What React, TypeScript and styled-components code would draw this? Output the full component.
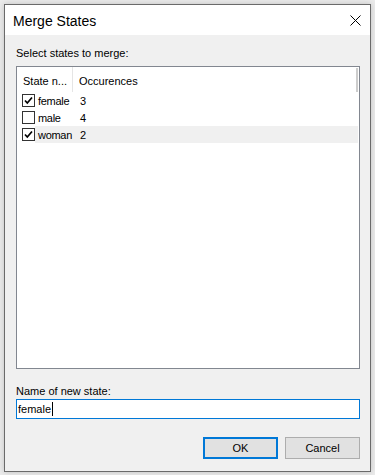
import React from "react"
import styled, { createGlobalStyle } from "styled-components"

const GlobalStyle = createGlobalStyle`
  html, body {
    margin: 0;
    padding: 0;
    background: #ebebeb;
  }
  * {
    box-sizing: border-box;
  }
`

type StateRow = { name: string; count: number; checked: boolean; hover?: boolean }

const rows: StateRow[] = [
  { name: "female", count: 3, checked: true },
  { name: "male", count: 4, checked: false },
  { name: "woman", count: 2, checked: true, hover: true },
]

const Page = styled.div`
  padding: 4px 4px 3px 4px;
  font-family: "Segoe UI", "Liberation Sans", Arial, sans-serif;
  font-size: 11px;
  color: #000;
`

const Window = styled.div`
  width: 367px;
  height: 468px;
  border: 1px solid #6a6a6a;
  background: #f0f0f0;
  display: flex;
  flex-direction: column;
  box-shadow: 0 0 6px rgba(0, 0, 0, 0.18);
`

const TitleBar = styled.div`
  height: 30px;
  background: #fff;
  display: flex;
  align-items: center;
  justify-content: space-between;
  padding: 0 9px 0 8px;
  flex-shrink: 0;
`

const Title = styled.span`
  font-size: 14px;
  padding-top: 2px;
`

const CloseButton = styled.div`
  width: 12px;
  height: 12px;
  display: flex;
  align-items: center;
  justify-content: center;
`

const Body = styled.div`
  flex: 1;
  display: flex;
  flex-direction: column;
  padding: 11px 10px 12px 11px;
  min-height: 0;
`

const Label = styled.div<{ $top?: number }>`
  line-height: 15px;
  height: 15px;
  margin-top: ${({ $top }) => $top ?? 0}px;
`

const ListBox = styled.div`
  flex: 1;
  margin-top: 5px;
  border: 1px solid #828790;
  background: #fff;
  position: relative;
  min-height: 0;
`

const HeaderRow = styled.div`
  display: flex;
  height: 25px;
  align-items: stretch;
`

const HeaderCell = styled.div<{ $width?: number }>`
  width: ${({ $width }) => ($width ? `${$width}px` : "auto")};
  flex: ${({ $width }) => ($width ? "none" : "1")};
  padding-left: 6px;
  padding-top: 2px;
  display: flex;
  align-items: center;
  border-right: ${({ $width }) => ($width ? "1px solid #e5e5e5" : "none")};
`

const Row = styled.div`
  display: flex;
  height: 17px;
  align-items: center;
`

const NameCell = styled.div`
  width: 56px;
  display: flex;
  align-items: center;
  padding-left: 5px;
  height: 100%;
`

const NameText = styled.span<{ $hover?: boolean }>`
  flex: 1;
  height: 100%;
  display: flex;
  align-items: center;
  padding-left: 3px;
  white-space: nowrap;
  letter-spacing: -0.3px;
  background: ${({ $hover }) => ($hover ? "#f0f0f0" : "transparent")};
`

const CountCell = styled.div<{ $hover?: boolean }>`
  flex: 1;
  height: 100%;
  display: flex;
  align-items: center;
  padding-left: 7px;
  margin-right: 1px;
  background: ${({ $hover }) => ($hover ? "#f0f0f0" : "transparent")};
`

const CheckBox = styled.div`
  width: 13px;
  height: 13px;
  border: 1px solid #333;
  background: #fff;
  display: flex;
  align-items: center;
  justify-content: center;
  flex-shrink: 0;
`

const ScrollHint = styled.div`
  position: absolute;
  top: 1px;
  right: 1px;
  width: 2px;
  height: 24px;
  background: #cdcdcd;
`

const TextBox = styled.div`
  height: 20px;
  border: 1px solid #0078d7;
  background: #fff;
  display: flex;
  align-items: center;
  padding-left: 1px;
`

const Caret = styled.span`
  display: inline-block;
  width: 1px;
  height: 14px;
  background: #000;
  margin-left: 1px;
`

const ButtonRow = styled.div`
  display: flex;
  justify-content: flex-end;
  gap: 7px;
  margin-top: 18px;
`

const Button = styled.div<{ $primary?: boolean }>`
  width: 75px;
  height: 22px;
  background: #e1e1e1;
  border: ${({ $primary }) => ($primary ? "2px solid #0078d7" : "1px solid #adadad")};
  display: flex;
  align-items: center;
  justify-content: center;
`

const Check = () => (
  <svg width="9" height="9" viewBox="0 0 9 9">
    <path d="M1 4.5 L3.3 7 L8 1.5" fill="none" stroke="#000" strokeWidth="1.7" />
  </svg>
)

export default function App() {
  return (
    <Page>
      <GlobalStyle />
      <Window>
        <TitleBar>
          <Title>Merge States</Title>
          <CloseButton>
            <svg width="11" height="11" viewBox="0 0 11 11">
              <path d="M0.5 0.5 L10.5 10.5 M10.5 0.5 L0.5 10.5" stroke="#000" strokeWidth="1" />
            </svg>
          </CloseButton>
        </TitleBar>
        <Body>
          <Label>Select states to merge:</Label>
          <ListBox>
            <HeaderRow>
              <HeaderCell $width={56}>State n...</HeaderCell>
              <HeaderCell>Occurences</HeaderCell>
            </HeaderRow>
            {rows.map((r) => (
              <Row key={r.name}>
                <NameCell>
                  <CheckBox>{r.checked && <Check />}</CheckBox>
                  <NameText $hover={r.hover}>{r.name}</NameText>
                </NameCell>
                <CountCell $hover={r.hover}>{r.count}</CountCell>
              </Row>
            ))}
            <ScrollHint />
          </ListBox>
          <Label $top={15}>Name of new state:</Label>
          <TextBox>
            female
            <Caret />
          </TextBox>
          <ButtonRow>
            <Button $primary>OK</Button>
            <Button>Cancel</Button>
          </ButtonRow>
        </Body>
      </Window>
    </Page>
  )
}
